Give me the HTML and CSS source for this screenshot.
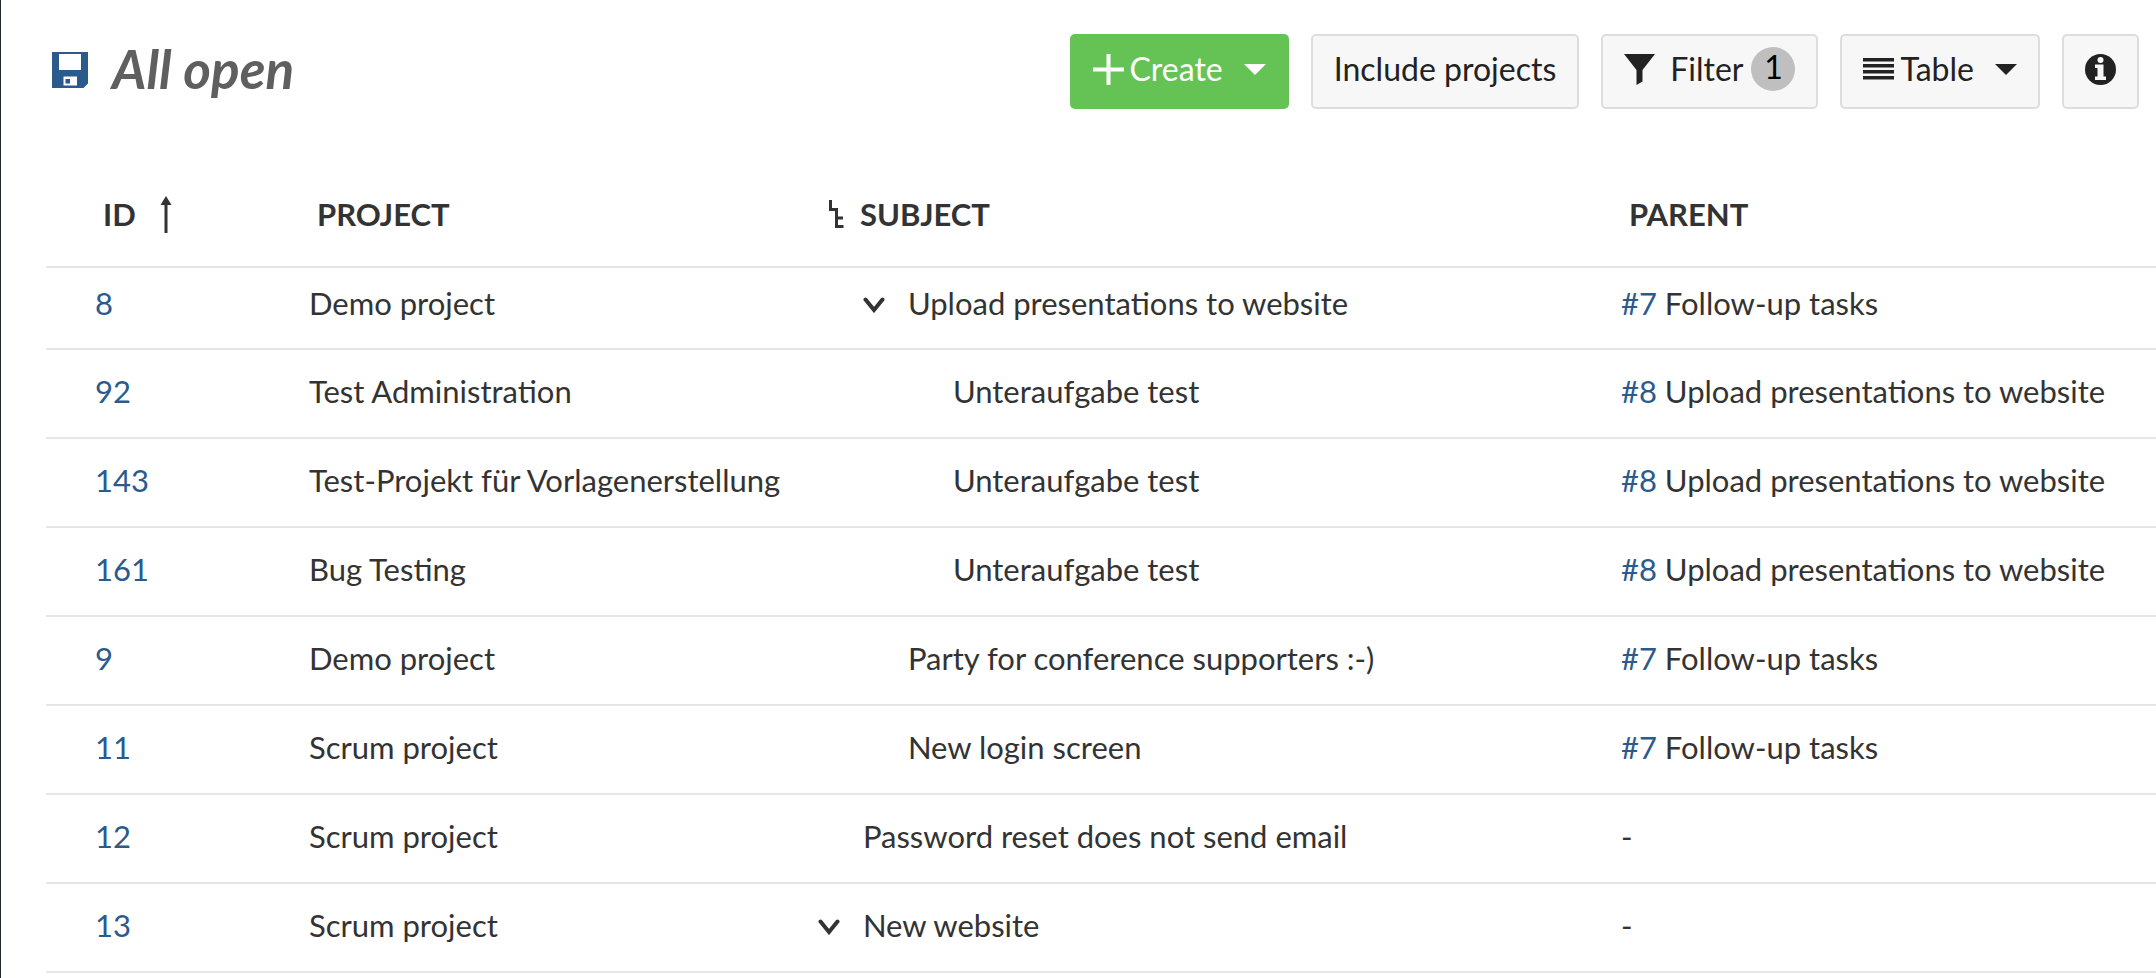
FILE: index.html
```html
<!DOCTYPE html>
<html lang="en">
<head>
<meta charset="utf-8">
<title>All open</title>
<link rel="stylesheet" href="styles.css">
</head>
<body>
<main class="page">
  <header class="toolbar">
    <div class="heading">
      <button class="save" type="button" aria-label="Save view">
        <svg width="36" height="36" viewBox="0 0 36 36"><path fill="#2b5a8c" fill-rule="evenodd" d="M0 0h36v31.500l-4.500 4.500H0zM7 2v16h22V2zM11.500 24.500v9h13.500v-9zM13.500 27h4.500v4.500h-4.500z"/></svg>
      </button>
      <h1 class="title">All open</h1>
    </div>
    <div class="actions">
      <button class="btn create" type="button">
        <svg class="icon" width="31" height="31" viewBox="0 0 31 31"><path fill="currentColor" d="M13.500 0h4v13.500H31v4H17.500V31h-4V17.500H0v-4h13.500z"/></svg>
        <span class="label">Create</span>
        <svg class="caret" width="22" height="11" viewBox="0 0 22 11"><path fill="currentColor" d="M0 0h22L11 11z"/></svg>
      </button>
      <button class="btn" type="button">Include projects</button>
      <button class="btn filter" type="button">
        <svg class="icon" width="31" height="31" viewBox="0 0 31 31"><path fill="currentColor" d="M0 0h31L18.500 16v11.500L12.500 31V16z"/></svg>
        <span class="label">Filter</span>
        <span class="badge">1</span>
      </button>
      <button class="btn view" type="button">
        <svg class="icon" width="31" height="22" viewBox="0 0 31 22"><path fill="currentColor" d="M0 0h31v3.500H0zM0 6h31v3.500H0zM0 12h31v3.500H0zM0 18h31v3.500H0z"/></svg>
        <span class="label">Table</span>
        <svg class="caret" width="22" height="11" viewBox="0 0 22 11"><path fill="currentColor" d="M0 0h22L11 11z"/></svg>
      </button>
      <button class="btn info" type="button" aria-label="Details">
        <svg class="icon" width="31" height="31" viewBox="0 0 31 31"><circle cx="15.500" cy="15.500" r="15.500" fill="currentColor"/><circle cx="15.500" cy="6" r="3" fill="#f7f7f7"/><path fill="#f7f7f7" d="M10 10.500h8.500v12H21V26H10v-3.500h2.500V14H10z"/></svg>
      </button>
    </div>
  </header>

  <table class="list">
    <colgroup><col class="c-id"><col class="c-project"><col class="c-subject"><col class="c-parent"></colgroup>
    <thead>
      <tr>
        <th scope="col"><span class="head">ID<svg class="sort" width="12" height="37" viewBox="0 0 12 37"><path fill="currentColor" d="M6 0l5.500 9H7.500v28h-3V9H.5z"/></svg></span></th>
        <th scope="col"><span class="head">PROJECT</span></th>
        <th scope="col"><span class="head tree"><svg width="15" height="28" viewBox="0 0 15 28"><path fill="none" stroke="currentColor" stroke-width="3" d="M1.500 0v9.500H7.500V26.500H14.500M7.500 18H14"/></svg>SUBJECT</span></th>
        <th scope="col"><span class="head">PARENT</span></th>
      </tr>
    </thead>
    <tbody>
      <tr>
        <td><a href="#8">8</a></td><td>Demo project</td>
        <td><span class="subject level-2"><button class="toggle" type="button" aria-label="Collapse"><svg width="22" height="16" viewBox="0 0 22 16"><path class="chevron" d="M2.500 2.500l8.500 10.500 8.500-10.500"/></svg></button>Upload presentations to website</span></td>
        <td><a href="#7">#7</a> Follow-up tasks</td>
      </tr>
      <tr>
        <td><a href="#92">92</a></td><td>Test Administration</td>
        <td><span class="subject level-3"><span class="toggle"></span>Unteraufgabe test</span></td>
        <td><a href="#8">#8</a> Upload presentations to website</td>
      </tr>
      <tr>
        <td><a href="#143">143</a></td><td>Test-Projekt für Vorlagenerstellung</td>
        <td><span class="subject level-3"><span class="toggle"></span>Unteraufgabe test</span></td>
        <td><a href="#8">#8</a> Upload presentations to website</td>
      </tr>
      <tr>
        <td><a href="#161">161</a></td><td>Bug Testing</td>
        <td><span class="subject level-3"><span class="toggle"></span>Unteraufgabe test</span></td>
        <td><a href="#8">#8</a> Upload presentations to website</td>
      </tr>
      <tr>
        <td><a href="#9">9</a></td><td>Demo project</td>
        <td><span class="subject level-2"><span class="toggle"></span>Party for conference supporters :-)</span></td>
        <td><a href="#7">#7</a> Follow-up tasks</td>
      </tr>
      <tr>
        <td><a href="#11">11</a></td><td>Scrum project</td>
        <td><span class="subject level-2"><span class="toggle"></span>New login screen</span></td>
        <td><a href="#7">#7</a> Follow-up tasks</td>
      </tr>
      <tr>
        <td><a href="#12">12</a></td><td>Scrum project</td>
        <td><span class="subject"><span class="toggle"></span>Password reset does not send email</span></td>
        <td>-</td>
      </tr>
      <tr>
        <td><a href="#13">13</a></td><td>Scrum project</td>
        <td><span class="subject"><button class="toggle" type="button" aria-label="Collapse"><svg width="22" height="16" viewBox="0 0 22 16"><path class="chevron" d="M2.500 2.500l8.500 10.500 8.500-10.500"/></svg></button>New website</span></td>
        <td>-</td>
      </tr>
    </tbody>
  </table>
</main>
</body>
</html>
```
FILE: styles.css
```css
* { box-sizing: border-box; }

body {
  margin: 0;
  background: #fff;
  color: #333;
  font-family: Lato, "Liberation Sans", sans-serif;
  font-size: 31px;
  line-height: 40px;
}

button {
  font: inherit;
  color: inherit;
  cursor: pointer;
}

.page {
  min-height: 100vh;
  border-left: 1px solid #24292f;
  padding-left: 45px;
}

.toolbar {
  display: flex;
  justify-content: space-between;
  padding: 34px 17px 0 6px;
}

.heading {
  display: flex;
  align-items: center;
  gap: 24px;
  padding-bottom: 5px;
}

.save {
  display: flex;
  padding: 2px 0 0;
  border: 0;
  background: none;
}

.title {
  margin: 0;
  color: #5f5f5f;
  font-size: 53px;
  font-style: italic;
  font-weight: 700;
  line-height: 64px;
}

.actions {
  display: flex;
  gap: 22px;
}

.btn {
  display: flex;
  align-items: center;
  height: 75px;
  padding: 0 21px 5px;
  border: 2px solid #ddd;
  border-radius: 5px;
  background: #f7f7f7;
  color: #222;
  font-size: 32px;
  white-space: nowrap;
}

.create {
  border-color: #65c355;
  background: #65c355;
  color: #fff;
}

.create .label, .view .label { margin-left: 6px; }
.caret { margin-left: 21px; }
.filter .label { margin-left: 15px; }

.badge {
  width: 44px;
  height: 44px;
  margin-left: 8px;
  border-radius: 50%;
  background: #bfbfbf;
  color: #000;
  text-align: center;
}

.list {
  width: 100%;
  margin-top: 62px;
  border-collapse: separate;
  border-spacing: 0;
  table-layout: fixed;
}

.c-id { width: 10.14%; }
.c-project { width: 24.12%; }
.c-subject { width: 38.06%; }

th, td {
  height: 89px;
  padding: 0 0 5px 49px;
  border-bottom: 2px solid #e6e6e6;
  text-align: left;
  vertical-align: middle;
  white-space: nowrap;
}

th {
  height: 97px;
  padding-bottom: 9px;
  font-weight: 700;
}

tbody tr:first-child td {
  height: 82px;
  padding-bottom: 10px;
}

.head {
  display: flex;
  align-items: center;
  padding-left: 8px;
}

.sort { margin-left: 24px; }

.tree {
  gap: 16px;
  padding-left: 11px;
}

a {
  color: #2b5a8c;
  text-decoration: none;
}

.subject {
  display: flex;
  align-items: center;
}

.level-2 { padding-left: 45px; }
.level-3 { padding-left: 90px; }

.toggle {
  display: flex;
  width: 45px;
  padding: 4px 0 0;
  border: 0;
  background: none;
}

.chevron {
  fill: none;
  stroke: #333;
  stroke-width: 4;
  stroke-linecap: round;
}
```
